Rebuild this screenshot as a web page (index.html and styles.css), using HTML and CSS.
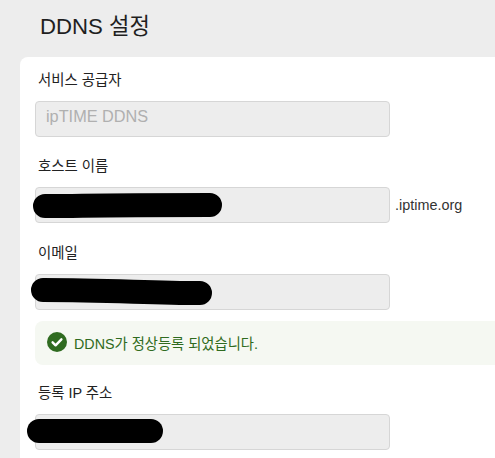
FILE: index.html
```html
<!DOCTYPE html>
<html lang="ko">
<head>
<meta charset="utf-8">
<title>DDNS 설정</title>
<link rel="stylesheet" href="styles.css">
</head>
<body>
<main class="page">
  <h1 class="title">DDNS 설정</h1>
  <section class="card">
    <div class="field field-service">
      <label class="label">서비스 공급자</label>
      <div class="input input-muted">ipTIME DDNS</div>
    </div>
    <div class="field field-host">
      <label class="label">호스트 이름</label>
      <div class="input-row">
        <div class="input"></div>
        <span class="suffix">.iptime.org</span>
      </div>
    </div>
    <div class="field field-email">
      <label class="label">이메일</label>
      <div class="input"></div>
    </div>
    <div class="notice">
      <svg class="notice-icon" viewBox="0 0 20 20" aria-hidden="true">
        <circle cx="10" cy="10" r="10" fill="#2f6b20"/>
        <path d="M5.6 10.3l3 3 5.8-6" fill="none" stroke="#fff" stroke-width="2.4" stroke-linecap="round" stroke-linejoin="round"/>
      </svg>
      <span>DDNS가 정상등록 되었습니다.</span>
    </div>
    <div class="field">
      <label class="label">등록 IP 주소</label>
      <div class="input"></div>
    </div>
  </section>
  <svg class="redactions" viewBox="0 0 495 458" aria-hidden="true">
    <path d="M45 206C90 206 80 205 210 205"/>
    <path d="M43 290C110 290 150 293 200 293"/>
    <path d="M39 431L151 431"/>
  </svg>
</main>
</body>
</html>
```
FILE: styles.css
```css
* { box-sizing: border-box; }
html, body {
  margin: 0;
  height: 100%;
  overflow: hidden;
  background: #ededed;
}
body {
  font-family: "Liberation Sans", "Noto Sans CJK KR", sans-serif;
  font-size: 14.4px;
  color: #222;
}
.page {
  position: relative;
  width: 495px;
  height: 458px;
  overflow: hidden;
}
.title {
  margin: 0;
  padding: 14px 0 0 40px;
  height: 57px;
  font-size: 22.2px;
  line-height: 26px;
  font-weight: 400;
  color: #1f1f1f;
}
.card {
  width: 600px;
  height: 500px;
  margin-left: 20px;
  padding: 12px 15px 0;
  background: #fff;
  border-radius: 8px 8px 0 0;
}
.field-service { margin-bottom: 18px; }
.field-host { margin-bottom: 19px; }
.field-email { margin-bottom: 11px; }
.label {
  display: block;
  height: 32px;
  padding-left: 3px;
  line-height: 22px;
  color: #222;
}
.input {
  width: 355px;
  height: 36px;
  padding: 0 10px;
  line-height: 28px;
  background: #ededed;
  border: 1px solid #d6d6d6;
  border-radius: 4px;
}
.input-muted {
  font-size: 16.3px;
  color: #b0b0b0;
}
.input-row {
  display: flex;
  align-items: center;
  gap: 5px;
}
.suffix { color: #333; }
.notice {
  display: flex;
  align-items: center;
  gap: 7px;
  height: 44px;
  margin-bottom: 17px;
  padding: 0 0 2px 12px;
  background: #f5f8f2;
  border-radius: 8px;
  color: #2f6b20;
  font-size: 14.3px;
}
.notice-icon {
  width: 20px;
  height: 20px;
  flex: none;
}
.redactions {
  position: absolute;
  left: 0;
  top: 0;
  width: 495px;
  height: 458px;
  fill: none;
  stroke: #000;
  stroke-width: 24;
  stroke-linecap: round;
}
```
